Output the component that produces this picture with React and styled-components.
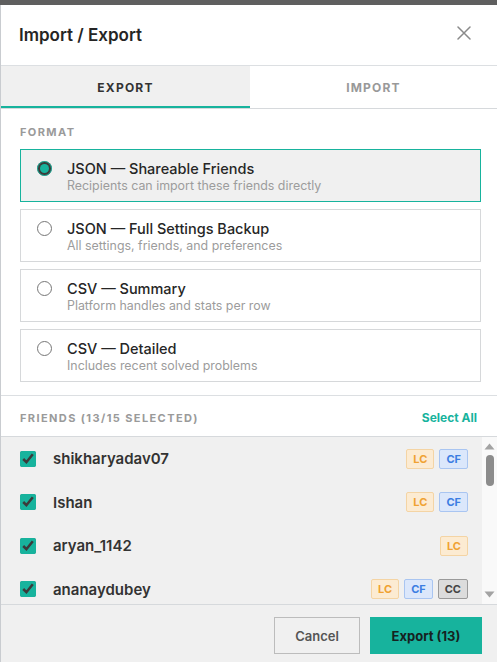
import React, { useState } from 'react'
import styled, { createGlobalStyle } from 'styled-components'

const teal = '#17b39d'

const GlobalStyle = createGlobalStyle`
  html, body {
    margin: 0;
    padding: 0;
    background: #5f5f5f;
    font-family: Inter, "Open Sans", sans-serif;
  }
  * { box-sizing: border-box; }
`

const formats = [
  { id: 'share', title: 'JSON — Shareable Friends', desc: 'Recipients can import these friends directly' },
  { id: 'backup', title: 'JSON — Full Settings Backup', desc: 'All settings, friends, and preferences' },
  { id: 'summary', title: 'CSV — Summary', desc: 'Platform handles and stats per row' },
  { id: 'detailed', title: 'CSV — Detailed', desc: 'Includes recent solved problems' },
]

const friends = [
  { name: 'shikharyadav07', tags: ['LC', 'CF'], on: true },
  { name: 'Ishan', tags: ['LC', 'CF'], on: true },
  { name: 'aryan_1142', tags: ['LC'], on: true },
  { name: 'ananaydubey', tags: ['LC', 'CF', 'CC'], on: true },
  { name: 'rohit_k', tags: ['CF'], on: true },
  { name: 'devansh21', tags: ['LC', 'CC'], on: true },
  { name: 'meera.s', tags: ['LC'], on: true },
  { name: 'karan_dev', tags: ['CF'], on: false },
  { name: 'tanvi09', tags: ['LC', 'CF'], on: true },
  { name: 'arjun_m', tags: ['CC'], on: true },
  { name: 'nisha_p', tags: ['LC'], on: true },
  { name: 'vikram', tags: ['CF'], on: false },
  { name: 'pranav_r', tags: ['LC', 'CF'], on: true },
  { name: 'sneha', tags: ['LC'], on: true },
  { name: 'aditya_x', tags: ['CF', 'CC'], on: true },
]

const tagColors = {
  LC: { bg: '#fcebd2', border: '#f4d4a4', fg: '#f0a232' },
  CF: { bg: '#dbe7fb', border: '#a9c5f1', fg: '#3b7de2' },
  CC: { bg: '#dcdcdc', border: '#9a9a9a', fg: '#444' },
}

function App() {
  const [format, setFormat] = useState('share')
  const [tab, setTab] = useState('export')

  return (
    <>
      <GlobalStyle />
      <Backdrop>
        <Modal>
          <Header>
            <Title>Import / Export</Title>
            <CloseButton aria-label='Close'>
              <svg width='14' height='14' viewBox='0 0 14 14'>
                <path d='M1 1L13 13M13 1L1 13' stroke='#8a8a8a' strokeWidth='1.5' strokeLinecap='round' />
              </svg>
            </CloseButton>
          </Header>

          <Tabs>
            <Tab $active={tab === 'export'} onClick={() => setTab('export')}>EXPORT</Tab>
            <Tab $active={tab === 'import'} onClick={() => setTab('import')}>IMPORT</Tab>
          </Tabs>

          <Section>
            <Label>FORMAT</Label>
            <Options>
              {formats.map((f) => (
                <Option key={f.id} $selected={format === f.id}>
                  <Radio
                    type='radio'
                    name='format'
                    checked={format === f.id}
                    onChange={() => setFormat(f.id)}
                  />
                  <OptionText>
                    <OptionTitle>{f.title}</OptionTitle>
                    <OptionDesc>{f.desc}</OptionDesc>
                  </OptionText>
                </Option>
              ))}
            </Options>
          </Section>

          <FriendsHeader>
            <Label>FRIENDS (13/15 SELECTED)</Label>
            <SelectAll>Select All</SelectAll>
          </FriendsHeader>

          <ListWrap>
            <FriendList>
              {friends.map((f) => (
                <FriendRow key={f.name}>
                  <Check type='checkbox' defaultChecked={f.on} />
                  <Name>{f.name}</Name>
                  <Tags>
                    {f.tags.map((t) => (
                      <Tag key={t} $kind={t}>{t}</Tag>
                    ))}
                  </Tags>
                </FriendRow>
              ))}
            </FriendList>
            <ScrollBar>
              <svg width='15' height='14' viewBox='0 0 15 14'>
                <path d='M2.5 10.5L7.5 4.5L12.5 10.5Z' fill='#a3a3a3' />
              </svg>
              <Thumb />
              <Track />
              <svg width='15' height='14' viewBox='0 0 15 14'>
                <path d='M2.5 3.5L7.5 9.5L12.5 3.5Z' fill='#a3a3a3' />
              </svg>
            </ScrollBar>
          </ListWrap>

          <Footer>
            <CancelButton>Cancel</CancelButton>
            <ExportButton>Export (13)</ExportButton>
          </Footer>
        </Modal>
      </Backdrop>
    </>
  )
}

const Backdrop = styled.div`
  padding-top: 5px;
  height: 662px;
  overflow: hidden;
`

const Modal = styled.div`
  background: #fff;
  border-left: 1px solid #c9ccd0;
  height: 657px;
  display: flex;
  flex-direction: column;
`

const Header = styled.div`
  height: 61px;
  padding: 0 20px 0 18px;
  display: flex;
  align-items: center;
  justify-content: space-between;
  border-bottom: 1px solid #dcdfe2;
`

const Title = styled.h2`
  margin: 0;
  font-size: 17px;
  font-weight: 600;
  color: #252525;
`

const CloseButton = styled.button`
  border: 0;
  background: none;
  padding: 6px;
  margin-top: -4px;
  display: flex;
  cursor: pointer;
`

const Tabs = styled.div`
  display: grid;
  grid-template-columns: 249px 1fr;
  height: 43px;
  border-bottom: 1px solid #d6d9dc;
`

const Tab = styled.button`
  border: 0;
  border-bottom: 2px solid ${(p) => (p.$active ? teal : 'transparent')};
  background: ${(p) => (p.$active ? '#f0f0f0' : '#fff')};
  color: ${(p) => (p.$active ? '#333' : '#999')};
  font-family: inherit;
  font-size: 12px;
  font-weight: 700;
  letter-spacing: 1.2px;
  padding: 2px 0 0;
  cursor: pointer;
`

const Section = styled.div`
  padding: 16px 16px 13px 19px;
  border-bottom: 1px solid #dcdfe2;
`

const Label = styled.div`
  font-size: 11px;
  line-height: 14px;
  font-weight: 700;
  letter-spacing: 1.4px;
  color: #9a9a9a;
`

const Options = styled.div`
  display: flex;
  flex-direction: column;
  gap: 7px;
  margin-top: 10px;
`

const Option = styled.label`
  display: flex;
  align-items: flex-start;
  gap: 15px;
  height: 53px;
  padding: 9px 16px 0 16px;
  border: 1px solid ${(p) => (p.$selected ? teal : '#d6d8da')};
  background: ${(p) => (p.$selected ? '#f0f0f0' : '#fff')};
  cursor: pointer;
`

const Radio = styled.input`
  margin: 2px 0 0;
  width: 15px;
  height: 15px;
  accent-color: ${teal};
`

const OptionText = styled.div`
  display: flex;
  flex-direction: column;
`

const OptionTitle = styled.span`
  font-size: 14.5px;
  font-weight: 500;
  color: #262626;
  line-height: 19px;
`

const OptionDesc = styled.span`
  font-size: 12.4px;
  color: #9c9c9c;
  line-height: 16px;
`

const FriendsHeader = styled.div`
  height: 41px;
  padding: 3px 20px 0 19px;
  display: flex;
  align-items: center;
  justify-content: space-between;
  border-bottom: 1px solid #d6d9dc;
`

const SelectAll = styled.button`
  border: 0;
  background: none;
  padding: 0;
  font-family: inherit;
  font-size: 12px;
  font-weight: 700;
  color: ${teal};
  cursor: pointer;
`

const ListWrap = styled.div`
  display: flex;
  height: 168px;
  flex-shrink: 0;
  border-bottom: 1px solid #d6d9dc;
`

const FriendList = styled.div`
  flex: 1;
  overflow-y: scroll;
  scrollbar-width: none;
  background: #f0f0f0;
  &::-webkit-scrollbar { display: none; }
`

const ScrollBar = styled.div`
  width: 15px;
  background: #f9f9f9;
  display: flex;
  flex-direction: column;
  align-items: center;
  padding: 2px 0;
`

const Thumb = styled.div`
  width: 8px;
  height: 31px;
  margin-top: 2px;
  border-radius: 4px;
  background: #8c8c8c;
`

const Track = styled.div`
  flex: 1;
`

const FriendRow = styled.label`
  display: flex;
  align-items: center;
  height: 43.5px;
  padding: 0 14px 0 19px;
  cursor: pointer;
`

const Check = styled.input`
  margin: 0;
  width: 16px;
  height: 16px;
  accent-color: ${teal};
`

const Name = styled.span`
  margin-left: 17px;
  flex: 1;
  font-size: 15px;
  font-weight: 600;
  color: #333;
`

const Tags = styled.div`
  display: flex;
  gap: 5px;
`

const Tag = styled.span`
  min-width: 28px;
  height: 20px;
  padding: 0 6px;
  display: inline-flex;
  align-items: center;
  justify-content: center;
  border-radius: 2px;
  font-size: 11px;
  font-weight: 700;
  background: ${(p) => tagColors[p.$kind].bg};
  border: 1px solid ${(p) => tagColors[p.$kind].border};
  color: ${(p) => tagColors[p.$kind].fg};
`

const Footer = styled.div`
  flex: 1;
  background: #f0f0f0;
  display: flex;
  justify-content: flex-end;
  align-items: flex-start;
  gap: 10px;
  padding: 12px 15px 0 0;
`

const CancelButton = styled.button`
  width: 86px;
  height: 37px;
  border: 1px solid #bcbcbc;
  background: #f0f0f0;
  color: #555;
  font-family: inherit;
  font-size: 13px;
  font-weight: 600;
  cursor: pointer;
`

const ExportButton = styled.button`
  width: 112px;
  height: 37px;
  border: 0;
  background: ${teal};
  color: #16221f;
  font-family: inherit;
  font-size: 13px;
  font-weight: 700;
  cursor: pointer;
`

export default App
